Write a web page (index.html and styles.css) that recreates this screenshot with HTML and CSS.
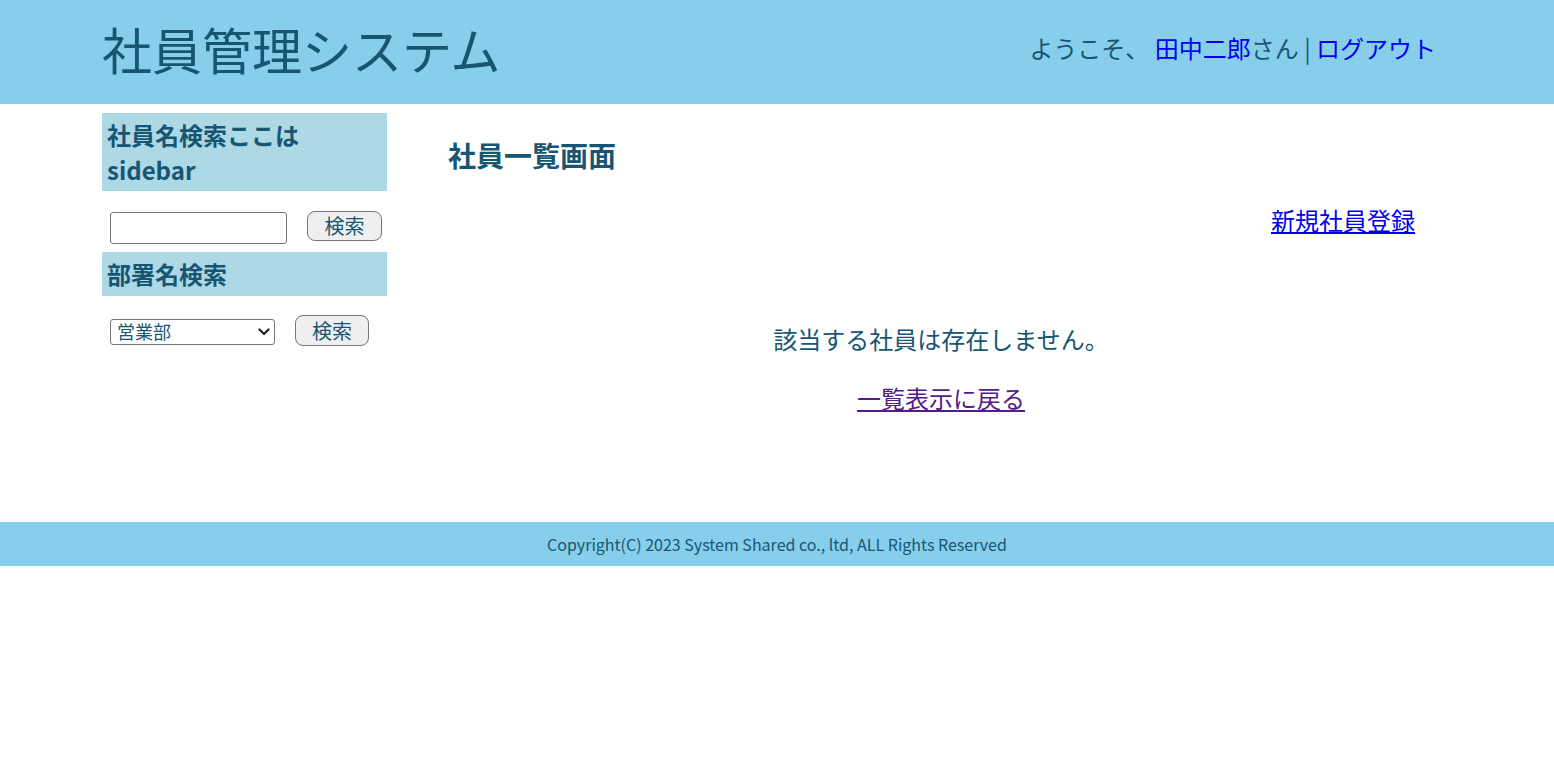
FILE: index.html
```html
<!DOCTYPE html>
<html lang="ja">
<head>
<meta charset="utf-8">
<title>社員管理システム</title>
<link rel="stylesheet" href="styles.css">
</head>
<body>
<header class="site-header">
  <div class="header-inner">
    <div class="site-title">社員管理システム</div>
    <div class="user-info">ようこそ、 <a href="#" class="user-link">田中二郎</a>さん | <a href="#" class="user-link">ログアウト</a></div>
  </div>
</header>
<div class="content">
  <aside class="sidebar">
    <h2 class="side-heading">社員名検索ここは sidebar</h2>
    <form class="search-form name-form">
      <input type="text" class="text-input">
      <button type="button" class="search-btn">検索</button>
    </form>
    <h2 class="side-heading dept-heading">部署名検索</h2>
    <form class="search-form dept-form">
      <span class="select-wrap">
        <select class="dept-select">
          <option>営業部</option>
        </select>
        <svg class="select-arrow" width="12" height="8" viewBox="0 0 12 8"><path d="M1.5 1.5 L6 6 L10.5 1.5" fill="none" stroke="#222" stroke-width="2.2" stroke-linecap="round" stroke-linejoin="round"/></svg>
      </span>
      <button type="button" class="search-btn">検索</button>
    </form>
  </aside>
  <main class="main">
    <h1 class="page-title">社員一覧画面</h1>
    <div class="new-link-row"><a href="#" class="new-link">新規社員登録</a></div>
    <p class="empty-msg">該当する社員は存在しません。</p>
    <div class="back-row"><a href="#" class="back-link">一覧表示に戻る</a></div>
  </main>
</div>
<footer class="site-footer">Copyright(C) 2023 System Shared co., ltd, ALL Rights Reserved</footer>
</body>
</html>
```
FILE: styles.css
```css
html, body {
  margin: 0;
  padding: 0;
}
body {
  font-family: "Noto Sans CJK JP", "Noto Sans", sans-serif;
  color: #175673;
  background: #fff;
}
.site-header {
  background: #87ceeb;
  height: 104px;
}
.header-inner {
  width: 1350px;
  margin: 0 auto;
  height: 100%;
  display: flex;
  align-items: center;
  justify-content: space-between;
}
.site-title {
  font-size: 50px;
  line-height: 1;
  margin-top: -8px;
}
.user-info {
  font-size: 24px;
  padding-right: 16px;
  margin-top: -9px;
}
.user-link {
  color: #0000ee;
  text-decoration: none;
}
.content {
  width: 1350px;
  margin: 9px auto 0;
  display: flex;
  align-items: flex-start;
}
.sidebar {
  width: 285px;
  flex: none;
}
.side-heading {
  margin: 0;
  background: #add8e6;
  font-size: 24px;
  font-weight: bold;
  line-height: 35px;
  padding: 4px 5px;
}
.dept-heading {
  padding-bottom: 5px;
}
.search-form {
  display: flex;
  align-items: flex-start;
  padding-left: 8px;
  margin: 0;
}
.name-form {
  padding-top: 20px;
  padding-bottom: 8px;
}
.dept-form {
  padding-top: 19px;
}
.text-input {
  box-sizing: border-box;
  width: 177px;
  height: 32px;
  margin: 1px 20px 0 0;
  border: 1px solid #767676;
  border-radius: 3px;
  font-family: inherit;
  font-size: 18px;
}
.search-btn {
  box-sizing: border-box;
  width: 75px;
  height: 30px;
  padding: 0;
  border: 1px solid #767676;
  border-radius: 8px;
  background: #efefef;
  color: #175673;
  font-family: inherit;
  font-size: 20px;
  line-height: 28px;
}
.dept-form .search-btn {
  width: 74px;
  height: 31px;
}
.select-wrap {
  position: relative;
  display: block;
  margin: 4px 20px 0 0;
  width: 165px;
  height: 26px;
}
.dept-select {
  box-sizing: border-box;
  display: block;
  width: 165px;
  height: 26px;
  margin: 0;
  border: 1px solid #767676;
  border-radius: 3px;
  background: #fff;
  color: #175673;
  font-family: inherit;
  font-size: 18px;
  line-height: 22px;
  padding: 0 20px 2px 6px;
  appearance: none;
  -webkit-appearance: none;
}
.select-arrow {
  position: absolute;
  right: 5px;
  top: 9px;
  pointer-events: none;
}
.main {
  flex: 1;
  padding-left: 61px;
  padding-right: 18px;
}
.page-title {
  margin: 21px 0 0;
  font-size: 28px;
  line-height: 42px;
  font-weight: bold;
}
.new-link-row {
  margin-top: 26px;
  text-align: right;
  padding-right: 19px;
  font-size: 24px;
  line-height: 36px;
}
.new-link {
  color: #0000ee;
}
.empty-msg {
  margin: 83px 0 0;
  text-align: center;
  font-size: 24px;
  line-height: 36px;
}
.back-row {
  margin-top: 23px;
  text-align: center;
  font-size: 24px;
  line-height: 36px;
}
.back-link {
  color: #551a8b;
}
.site-footer {
  margin-top: 106px;
  background: #87ceeb;
  height: 44px;
  line-height: 44px;
  text-align: center;
  font-size: 16px;
}
```
